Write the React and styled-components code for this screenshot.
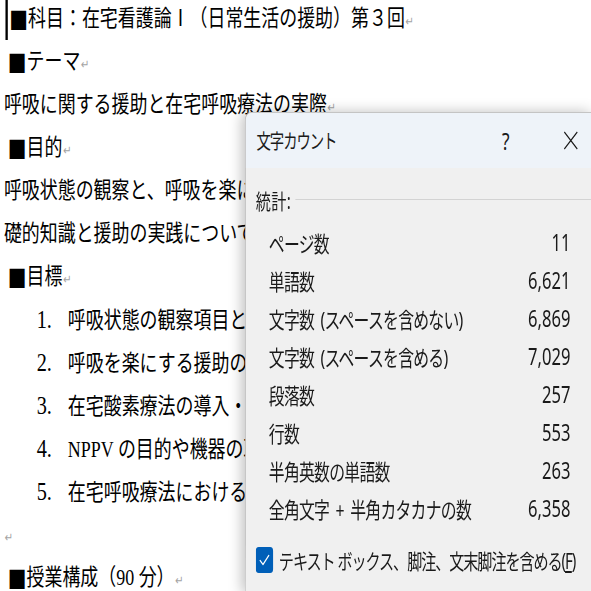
import React from 'react';
import styled, { createGlobalStyle } from 'styled-components';

const GlobalStyle = createGlobalStyle`
  html, body {
    margin: 0;
    padding: 0;
    background: #ffffff;
    overflow: hidden;
  }
`;

const Screen = styled.div`
  position: relative;
  width: 591px;
  height: 591px;
  overflow: hidden;
  background: #ffffff;
`;

// the capture is squeezed horizontally, so the page is laid out wider and scaled
const DocPage = styled.div`
  width: 758px;
  margin-top: -3px;
  padding-left: 5px;
  transform: scaleX(0.78);
  transform-origin: 0 0;
  font-family: "Liberation Serif", "Noto Sans CJK JP", serif;
  font-size: 23px;
  line-height: 43px;
  color: #000000;
  white-space: nowrap;
`;

const Line = styled.div`
  height: 43px;
  overflow: hidden;
`;

const Caret = styled.span`
  display: inline-block;
  width: 3px;
  height: 44px;
  margin-left: 2px;
  margin-right: -3px;
  vertical-align: top;
  background: #000000;
`;

const Square = styled.span`
  display: inline-block;
  width: 24px;
  margin-left: 5px;
  font-family: "Noto Sans CJK JP", sans-serif;
  font-size: 24px;
  line-height: 43px;
  vertical-align: top;
`;

const Ret = styled.span`
  font-family: "DejaVu Sans", sans-serif;
  font-size: 13px;
  color: #a3a3a3;
  margin-left: 1px;
`;

const ListLine = styled(Line)`
  padding-left: 42px;
`;

const Num = styled.span`
  display: inline-block;
  width: 40px;
  font-size: 26px;
`;

const Dialog = styled.div`
  position: absolute;
  left: 245px;
  top: 112px;
  width: 480px;
  height: 480px;
  transform: scaleX(0.72);
  transform-origin: 0 0;
  background: #f0f0f0;
  border-left: 1px solid #b9b9b9;
  border-top: 1px solid #c4c4c4;
  border-radius: 8px 0 0 0;
  box-shadow: -3px 0 16px rgba(0, 0, 0, 0.25);
  font-family: "Noto Sans", "Noto Sans CJK JP", sans-serif;
  color: #1a1a1a;
  overflow: hidden;
`;

const TitleBar = styled.div`
  height: 55px;
  display: flex;
  align-items: center;
  padding-left: 15px;
  background: #eef3f9;
  border-radius: 8px 0 0 0;
`;

const Title = styled.div`
  flex: 1;
  font-size: 20px;
  letter-spacing: -1.5px;
`;

const TitleButton = styled.div`
  width: 58px;
  height: 55px;
  display: flex;
  align-items: center;
  justify-content: center;
  font-size: 24px;
  margin-left: ${p => p.$gap || 0}px;
`;

const Body = styled.div`
  padding-top: 16px;
`;

const SectionHead = styled.div`
  display: flex;
  align-items: center;
  height: 32px;
  padding-left: 14px;
`;

const SectionLabel = styled.span`
  font-size: 21px;
  letter-spacing: 0.5px;
  margin-right: 6px;
`;

const Rule = styled.div`
  flex: 1;
  height: 1px;
  margin-top: -2px;
  background: #d3d3d3;
`;

const Stats = styled.div`
  margin-top: 7px;
  padding: 0 29px 0 32px;
`;

const StatRow = styled.div`
  height: 38px;
  display: flex;
  align-items: center;
  justify-content: space-between;
`;

const StatLabel = styled.span`
  font-size: 22px;
  letter-spacing: -1px;
  word-spacing: 4px;
`;

const StatValue = styled.span`
  font-size: 23px;
`;

const CheckRow = styled.div`
  margin-top: 18px;
  height: 30px;
  display: flex;
  align-items: center;
  padding-left: 14px;
`;

const Box = styled.span`
  width: 24px;
  height: 26px;
  border-radius: 4px;
  background: #005fb8;
  display: flex;
  align-items: center;
  justify-content: center;
  margin-right: 8px;
`;

const CheckLabel = styled.span`
  font-size: 21px;
  letter-spacing: -1.5px;
`;

const doc = [
  { type: 'head', text: 'テーマ' },
  { type: 'para', text: '呼吸に関する援助と在宅呼吸療法の実際' },
  { type: 'head', text: '目的' },
  { type: 'para', text: '呼吸状態の観察と、呼吸を楽にする援助および在宅呼吸療法の基', noRet: true },
  { type: 'para', text: '礎的知識と援助の実践について学ぶ。' },
  { type: 'head', text: '目標' },
  { type: 'item', num: '1.', text: '呼吸状態の観察項目と評価の視点を説明できる。' },
  { type: 'item', num: '2.', text: '呼吸を楽にする援助の方法を理解できる。' },
  { type: 'item', num: '3.', text: '在宅酸素療法の導入・管理を説明できる。' },
  { type: 'item', num: '4.', text: 'NPPV の目的や機器の取り扱いを理解できる。' },
  { type: 'item', num: '5.', text: '在宅呼吸療法における家族への支援を考える。' },
  { type: 'para', text: '' },
  { type: 'head', text: '授業構成（90 分）' },
];

const stats = [
  ['ページ数', '11'],
  ['単語数', '6,621'],
  ['文字数 (スペースを含めない)', '6,869'],
  ['文字数 (スペースを含める)', '7,029'],
  ['段落数', '257'],
  ['行数', '553'],
  ['半角英数の単語数', '263'],
  ['全角文字 + 半角カタカナの数', '6,358'],
];

const CloseIcon = () => (
  <svg width="21" height="19" viewBox="0 0 21 19">
    <path d="M1.5 1 L19.5 18 M19.5 1 L1.5 18" stroke="#1a1a1a" strokeWidth="1.6" fill="none" />
  </svg>
);

const CheckIcon = () => (
  <svg width="16" height="14" viewBox="0 0 16 14">
    <path d="M2 7.5 L6 11.5 L14 2.5" stroke="#ffffff" strokeWidth="1.6" fill="none" strokeLinecap="round" strokeLinejoin="round" />
  </svg>
);

const DocLine = ({ line }) => {
  if (line.type === 'head') {
    return <Line><Square>■</Square>{line.text}<Ret>↵</Ret></Line>;
  }
  if (line.type === 'item') {
    return <ListLine><Num>{line.num}</Num>{line.text}</ListLine>;
  }
  return <Line>{line.text}{!line.noRet && <Ret>↵</Ret>}</Line>;
};

const App = () => (
  <Screen>
    <GlobalStyle />
    <DocPage>
      <Line>
        <Caret />
        <Square>■</Square>科目：在宅看護論Ⅰ（日常生活の援助）第３回<Ret>↵</Ret>
      </Line>
      { doc.map((line, index) => <DocLine key={index} line={line} />) }
    </DocPage>

    <Dialog>
      <TitleBar>
        <Title>文字カウント</Title>
        <TitleButton>?</TitleButton>
        <TitleButton $gap={32}><CloseIcon /></TitleButton>
      </TitleBar>
      <Body>
        <SectionHead>
          <SectionLabel>統計:</SectionLabel>
          <Rule />
        </SectionHead>
        <Stats>
          { stats.map(([label, value]) => (
            <StatRow key={label}>
              <StatLabel>{label}</StatLabel>
              <StatValue>{value}</StatValue>
            </StatRow>
          )) }
        </Stats>
        <CheckRow>
          <Box><CheckIcon /></Box>
          <CheckLabel>テキスト ボックス、脚注、文末脚注を含める(<u>F</u>)</CheckLabel>
        </CheckRow>
      </Body>
    </Dialog>
  </Screen>
);

export default App;
